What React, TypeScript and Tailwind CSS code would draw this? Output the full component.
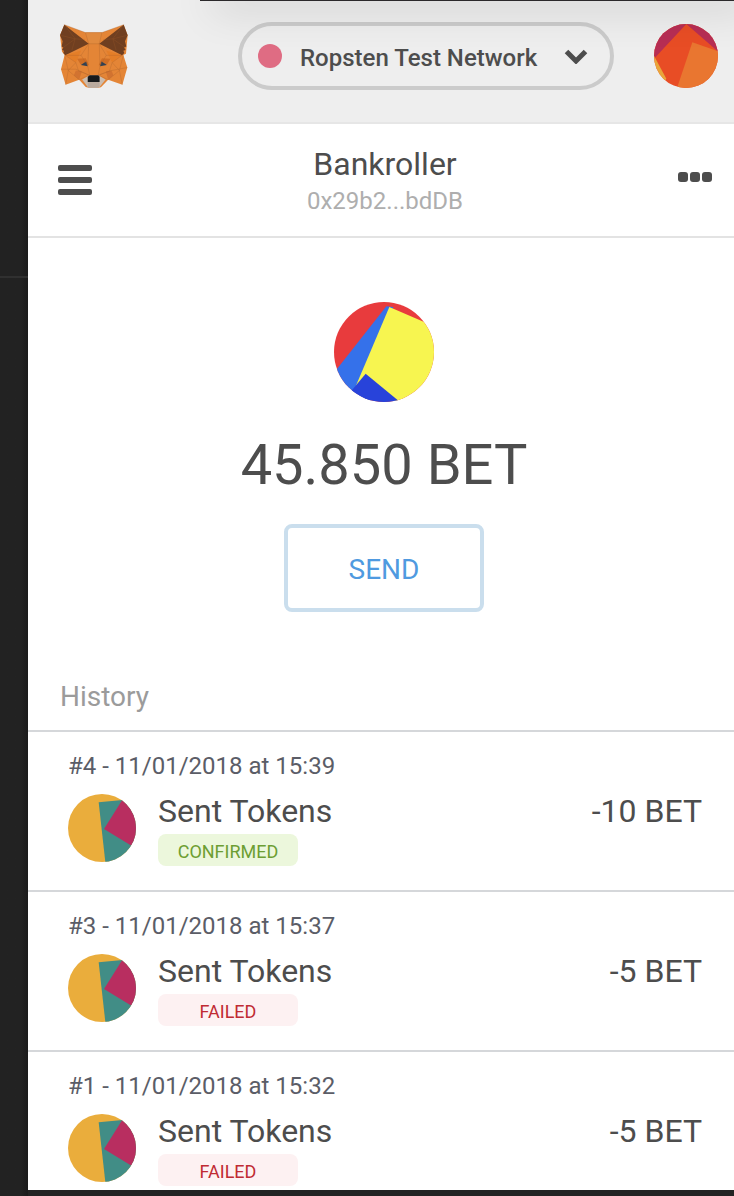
type Transaction = {
  nonce: number;
  date: string;
  amount: string;
  status: 'CONFIRMED' | 'FAILED';
};

const transactions: Transaction[] = [
  { nonce: 4, date: '11/01/2018 at 15:39', amount: '-10 BET', status: 'CONFIRMED' },
  { nonce: 3, date: '11/01/2018 at 15:37', amount: '-5 BET', status: 'FAILED' },
  { nonce: 1, date: '11/01/2018 at 15:32', amount: '-5 BET', status: 'FAILED' },
];

const badgeStyles = {
  CONFIRMED: 'bg-[#ecf7dc] text-[#6d9e33]',
  FAILED: 'bg-[#fdf1f2] text-[#c02b33]',
};

function FoxLogo() {
  return (
    <svg viewBox="28 28 206 194" className="h-16 w-17 shrink-0" role="img" aria-label="MetaMask">
      <path d="M41 30 105 54H155L221 30 233 62 228 118 220 122 232 160 217 212 174 197 152 220 140 222H118L106 219 86 197 45 212 31 165 42 122 34 112 28 62Z" fill="#e48536" />
      <path d="M105 54H155L148 88H115Z" fill="#e18a3e" />
      <path d="M41 30 115 88 44 123 38 116 40 109 34 107 38 99 33 96 36 80 28 62Z M221 30 147 88 216 123 223 116 220 109 227 107 222 99 229 96 225 80 233 62Z" fill="#703f20" />
      <path d="M44 123 92 108 76 145ZM216 123 168 108 186 145Z" fill="#e47e28" />
      <path d="M80 133 106 132 116 153 90 150ZM181 133 155 132 145 153 171 150Z" fill="#cf6e25" />
      <path d="M76 169 94 172 86 197 70 183ZM184 169 167 172 174 197 190 183Z" fill="#d27330" />
      <path d="M91 152 107 142 112 156ZM170 152 154 142 149 156Z" fill="#304153" />
      <path d="M95 196 116 184H145L166 196 148 219 140 221H119L112 219Z" fill="#cbbcaf" />
      <path d="M112 205 119 202H142L148 205 148 219 140 221H119L112 219Z" fill="#b9aa9e" />
      <path d="M41 30 105 54H155L221 30M105 54 115 88H147L155 54M115 88 92 123 44 123M147 88 168 123 216 123M41 30 74 73 64 107M28 62 74 73 103 75M38 99 74 73M221 30 188 73 198 107M233 62 188 73 159 75M225 99 188 73M115 88 112 156 118 183M147 88 149 156 144 183M92 123 112 156M168 123 149 156M44 123 76 145 53 169 42 122M216 123 186 145 208 169 220 122M31 165H76L116 183M232 160 184 169 145 183M45 212 53 169 86 197 116 183M217 212 208 169 174 197 145 183M76 145 84 170 116 183M186 145 178 170 145 183" fill="none" stroke="#a05c2b" strokeWidth="1.6" strokeLinejoin="round" opacity=".5" />
      <path d="M118 183H144L148 188V204H112V188Z" fill="#171a1c" />
    </svg>
  );
}

function AccountIcon() {
  return (
    <svg viewBox="42 42 192 192" className="size-16" aria-hidden="true">
      <clipPath id="account-clip"><circle cx="138" cy="138" r="96" /></clipPath>
      <g clipPath="url(#account-clip)">
        <path fill="#e84d25" d="M42 42H234V234H42Z" />
        <path fill="#b72e54" d="M42 42H139L42 146ZM139 42H240V130Z" />
        <path fill="#e9a63b" d="M38 130 79 206 60 234H38Z" />
        <path fill="#e97630" d="M157 97 240 126V240H109Z" />
      </g>
    </svg>
  );
}

function BankrollerIcon() {
  return (
    <svg viewBox="42 36 300 300" className="size-25" aria-hidden="true">
      <clipPath id="bankroller-clip"><circle cx="192" cy="186" r="150" /></clipPath>
      <g clipPath="url(#bankroller-clip)">
        <path fill="#e83b3d" d="M42 36H342V336H42Z" />
        <path fill="#3571ea" d="M199 49 36 256V336H150L220 51Z" />
        <path fill="#f7f550" d="M208 51 350 112V336H230L104 296Z" />
        <path fill="#2843da" d="M137 251 88 310V336H240Z" />
      </g>
    </svg>
  );
}

function TokenIcon({ id }: { id: string }) {
  return (
    <svg viewBox="54 162 204 204" className="size-17 shrink-0" aria-hidden="true">
      <clipPath id={id}><circle cx="156" cy="264" r="102" /></clipPath>
      <g clipPath={`url(#${id})`}>
        <path fill="#eaad3c" d="M54 162H258V366H54Z" />
        <path fill="#418d86" d="M146 187 258 176V366H166Z" />
        <path fill="#b82e60" d="M162 267 228 162H264V329Z" />
      </g>
    </svg>
  );
}

function Header() {
  return (
    <header className="flex h-31 items-start border-b-2 border-[#e6e6e6] bg-[#eeeeee] pt-[22px] pr-4 pl-8">
      <div className="pt-0.5">
        <FoxLogo />
      </div>
      <div className="mr-10 ml-auto flex h-17 items-center rounded-full border-4 border-[#cbcbcb] pr-[22px] pl-4">
        <span className="size-6 rounded-full bg-[#df6c83]" />
        <select
          aria-label="Network"
          className="mr-[26px] ml-[18px] appearance-none bg-transparent pt-1 text-2xl font-medium text-[#4d4d4d] outline-none"
        >
          <option>Ropsten Test Network</option>
        </select>
        <svg viewBox="0 0 24 16" className="h-4 w-6" aria-hidden="true">
          <path d="M2.5 3.5 12 13 21.5 3.5" fill="none" stroke="#4d4d4d" strokeWidth="5" />
        </svg>
      </div>
      <button type="button" aria-label="My accounts" className="mt-0.5 rounded-full">
        <AccountIcon />
      </button>
    </header>
  );
}

function AccountBar() {
  return (
    <div className="flex h-[114px] items-center justify-between border-b-2 border-[#e3e3e3] pr-[22px] pl-[30px]">
      <button type="button" aria-label="Menu" className="flex w-[34px] flex-col gap-1.5">
        <span className="h-1.5 rounded-xs bg-[#4d4d4d]" />
        <span className="h-1.5 rounded-xs bg-[#4d4d4d]" />
        <span className="h-1.5 rounded-xs bg-[#4d4d4d]" />
      </button>
      <div className="pt-0.5 text-center">
        <h1 className="text-[32px] leading-10 text-[#4d4d4d]">Bankroller</h1>
        <p className="text-2xl leading-[34px] text-[#aeaeae]">0x29b2...bdDB</p>
      </div>
      <button type="button" aria-label="Account options" className="flex w-[34px] justify-between pb-1.5">
        <span className="size-[10px] rounded-[3px] bg-[#4d4d4d]" />
        <span className="size-[10px] rounded-[3px] bg-[#4d4d4d]" />
        <span className="size-[10px] rounded-[3px] bg-[#4d4d4d]" />
      </button>
    </div>
  );
}

function TransactionRow({ nonce, date, amount, status }: Transaction) {
  return (
    <li className="border-t-2 border-[#d5d7da] px-8 pt-[18px] pb-6 last:pb-1">
      <p className="pl-2 text-2xl leading-8 text-[#5b5d67]">
        #{nonce} - {date}
      </p>
      <div className="flex items-start pt-2 pl-2">
        <div className="pt-1">
          <TokenIcon id={`token-${nonce}`} />
        </div>
        <div className="ml-[22px] flex-1">
          <p className="pb-0.5 text-[32px] leading-[42px] text-[#4d4d4d]">Sent Tokens</p>
          <p className={`flex h-8 w-35 items-center justify-center rounded-lg pt-1 text-lg ${badgeStyles[status]}`}>
            {status}
          </p>
        </div>
        <p className="text-[32px] leading-[42px] text-[#4d4d4d]">{amount}</p>
      </div>
    </li>
  );
}

export default function App() {
  return (
    <div className="relative flex min-h-screen items-start overflow-hidden bg-[#222222] font-[Roboto,sans-serif]">
      <aside className="w-7 shrink-0 self-stretch bg-linear-to-r from-[#222222] from-75% to-[#1b1b1b]">
        <div className="h-[278px] border-b-2 border-[#303030]" />
      </aside>
      <main className="min-w-0 flex-1 bg-white">
        <Header />
        <AccountBar />
        <section className="flex flex-col items-center pt-16 pl-1.5">
          <BankrollerIcon />
          <p className="mt-7 text-[56px] leading-[70px] text-[#4d4d4d]">45.850 BET</p>
          <button
            type="button"
            className="mt-6 h-22 w-50 rounded-lg border-4 border-[#cadeed] pt-1 text-[28px] text-[#4f9ae0]"
          >
            SEND
          </button>
        </section>
        <section>
          <h2 className="px-8 pt-16 pb-3 text-[28px] leading-[42px] text-[#9b9b9b]">History</h2>
          <ul>
            {transactions.map((transaction) => (
              <TransactionRow key={transaction.nonce} {...transaction} />
            ))}
          </ul>
        </section>
      </main>
      <div className="pointer-events-none absolute top-0 right-0 left-50 h-px bg-[#2b292b] shadow-[16px_0_40px_4px_rgba(0,0,0,0.3)]" />
    </div>
  );
}
